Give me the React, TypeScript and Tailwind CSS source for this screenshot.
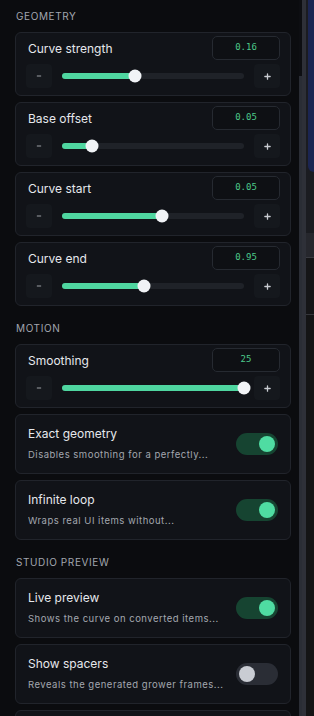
import { Plus, Minus } from 'lucide-react';

// Slider rows and toggle rows of the side panel
const geometry = [
  { label: 'Curve strength', value: '0.16', pct: 40 },
  { label: 'Base offset', value: '0.05', pct: 16.5 },
  { label: 'Curve start', value: '0.05', pct: 55 },
  { label: 'Curve end', value: '0.95', pct: 45 },
];

const motionToggles = [
  { label: 'Exact geometry', desc: 'Disables smoothing for a perfectly...', on: true },
  { label: 'Infinite loop', desc: 'Wraps real UI items without...', on: true },
];

const studioToggles = [
  { label: 'Live preview', desc: 'Shows the curve on converted items...', on: true },
  { label: 'Show spacers', desc: 'Reveals the generated grower frames...', on: false },
];

function SectionTitle({ children, first }: { children: string; first?: boolean }) {
  return (
    <div
      className={`${first ? 'mt-[10px]' : 'mt-[16px]'} mb-[10px] h-[12px] pl-[1px] text-[10px] leading-[12px] tracking-[0.6px] text-[#a2a6ae]`}
    >
      {children}
    </div>
  );
}

function SliderCard({ label, value, pct }: { label: string; value: string; pct: number }) {
  return (
    <div className="rounded-[6px] border border-[#21242b] bg-[#111318] px-[10px] pt-[3px] pb-[7px]">
      <div className="flex h-[24px] items-center justify-between">
        <span className="ml-[2px] pt-[2px] text-[12px] text-[#e6e8ec]">{label}</span>
        <div className="flex h-[24px] w-[68px] items-center justify-center rounded-[5px] border border-[#262a31] bg-[#0e1014] font-['DejaVu_Sans_Mono',monospace] text-[9px] text-[#4cc98a]">
          {value}
        </div>
      </div>
      <div className="mt-[4px] flex h-[24px] items-center">
        <button className="flex h-[24px] w-[26px] items-center justify-center rounded-[4px] bg-[#15181d] text-[#c9ccd2]">
          <Minus size={6} strokeWidth={3} />
        </button>
        <div className="relative mx-[10px] h-[6px] flex-1 rounded-full bg-[#1f2228]">
          <div className="h-full rounded-full bg-[#4fd6a0]" style={{ width: `${pct}%` }} />
          <div
            className="absolute top-1/2 h-[13px] w-[13px] -translate-x-1/2 -translate-y-1/2 rounded-full bg-[#f1f3f6]"
            style={{ left: `${pct}%` }}
          />
        </div>
        <button className="flex h-[24px] w-[26px] items-center justify-center rounded-[4px] bg-[#15181d] text-[#c9ccd2]">
          <Plus size={9} strokeWidth={3.5} />
        </button>
      </div>
    </div>
  );
}

function ToggleCard({ label, desc, on }: { label: string; desc: string; on: boolean }) {
  return (
    <div className="flex h-[60px] items-center rounded-[6px] border border-[#21242b] bg-[#111318] pl-[12px] pr-[12px]">
      <div className="min-w-0 flex-1">
        <div className="text-[12px] leading-[16px] text-[#e6e8ec]">{label}</div>
        <div className="mt-[6px] truncate text-[9.5px] leading-[14px] tracking-[0.5px] text-[#a3a7af]">{desc}</div>
      </div>
      <div
        className={`ml-[8px] flex h-[22px] w-[42px] shrink-0 items-center rounded-full px-[3px] ${
          on ? 'justify-end bg-[#164431]' : 'justify-start bg-[#2a2d35]'
        }`}
      >
        <div className={`h-[16px] w-[16px] rounded-full ${on ? 'bg-[#4fdca2]' : 'bg-[#c9ccd3]'}`} />
      </div>
    </div>
  );
}

export default function App() {
  return (
    <div className="flex h-[716px] w-[314px] overflow-hidden bg-[#0b0c0f] font-['Inter',sans-serif]">
      {/* Settings panel */}
      <div className="w-[299px] shrink-0 pl-[15px] pr-[8px]">
        <SectionTitle first>GEOMETRY</SectionTitle>
        <div className="flex flex-col gap-[6px]">
          {geometry.map((g) => (
            <SliderCard key={g.label} {...g} />
          ))}
        </div>

        <SectionTitle>MOTION</SectionTitle>
        <div className="flex flex-col gap-[6px]">
          <SliderCard label="Smoothing" value="25" pct={100} />
          {motionToggles.map((t) => (
            <ToggleCard key={t.label} {...t} />
          ))}
        </div>

        <SectionTitle>STUDIO PREVIEW</SectionTitle>
        <div className="flex flex-col gap-[6px]">
          {studioToggles.map((t) => (
            <ToggleCard key={t.label} {...t} />
          ))}
          {/* next card, mostly below the fold */}
          <div className="h-[60px] rounded-[6px] border border-[#21242b] bg-[#111318]" />
        </div>
      </div>

      {/* Scrollbar */}
      <div className="flex w-[3px] shrink-0 flex-col">
        <div className="h-[76px] bg-[#0d0e12]" />
        <div className="flex-1 bg-[#2a2d35]" />
      </div>
      <div className="w-[4px] shrink-0 bg-[#2e3038]" />

      {/* Canvas edge */}
      <div className="flex flex-1 flex-col bg-[#1b1c21]">
        <div className="ml-[2px] h-[172px] rounded-bl-[6px] bg-[#1b2552]" />
        <div className="h-[61px]" />
        <div className="h-[25px] border-b border-[#3a3b41] bg-[#26272d]" />
        <div className="h-[57px] border-b border-[#35363b] bg-[#151517]" />
        <div className="flex-1 bg-[#141415]" />
      </div>
    </div>
  );
}
